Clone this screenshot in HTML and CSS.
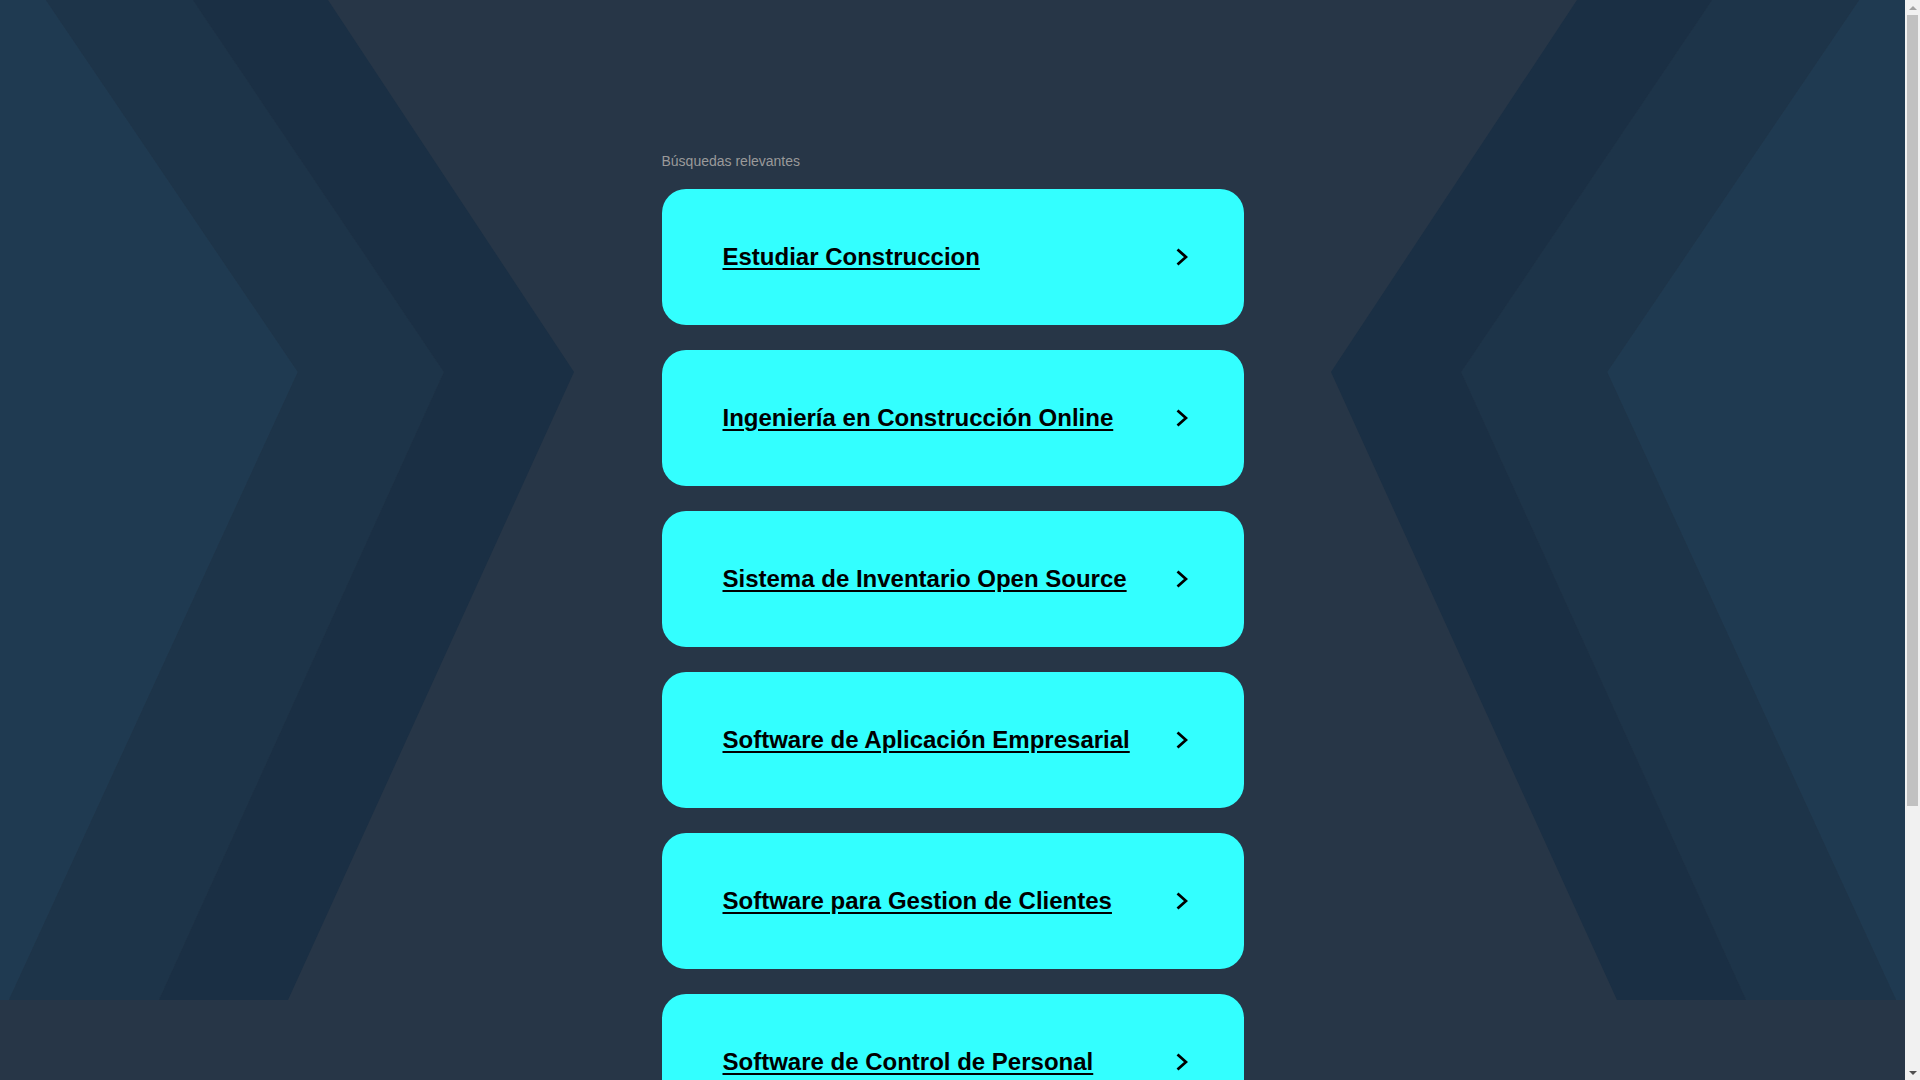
FILE: index.html
```html
<!DOCTYPE html>
<html lang="es">
<head>
<meta charset="utf-8">
<title>Búsquedas relevantes</title>
<link rel="stylesheet" href="styles.css">
</head>
<body>
<div class="page">
  <svg class="backdrop" viewBox="0 0 1905 1000" preserveAspectRatio="none" aria-hidden="true">
    <polygon class="band-light" points="0,0 46,0 298,372 9,1000 0,1000"/>
    <polygon class="band-mid" points="46,0 193,0 444,372 159,1000 9,1000 298,372"/>
    <polygon class="band-dark" points="193,0 328,0 574,372 288,1000 159,1000 444,372"/>
    <polygon class="band-light" points="1905,0 1859,0 1607,372 1896,1000 1905,1000"/>
    <polygon class="band-mid" points="1859,0 1712,0 1461,372 1746,1000 1896,1000 1607,372"/>
    <polygon class="band-dark" points="1712,0 1577,0 1331,372 1617,1000 1746,1000 1461,372"/>
  </svg>
  <main class="content">
    <div class="label">Búsquedas relevantes</div>
    <ul class="links">
      <li><a class="card" href="#"><span class="card-text">Estudiar Construccion</span><svg class="chev" viewBox="0 0 12 18"><polyline points="1.5,1.5 10,9 1.5,16.5"/></svg></a></li>
      <li><a class="card" href="#"><span class="card-text">Ingeniería en Construcción Online</span><svg class="chev" viewBox="0 0 12 18"><polyline points="1.5,1.5 10,9 1.5,16.5"/></svg></a></li>
      <li><a class="card" href="#"><span class="card-text">Sistema de Inventario Open Source</span><svg class="chev" viewBox="0 0 12 18"><polyline points="1.5,1.5 10,9 1.5,16.5"/></svg></a></li>
      <li><a class="card" href="#"><span class="card-text">Software de Aplicación Empresarial</span><svg class="chev" viewBox="0 0 12 18"><polyline points="1.5,1.5 10,9 1.5,16.5"/></svg></a></li>
      <li><a class="card" href="#"><span class="card-text">Software para Gestion de Clientes</span><svg class="chev" viewBox="0 0 12 18"><polyline points="1.5,1.5 10,9 1.5,16.5"/></svg></a></li>
      <li><a class="card" href="#"><span class="card-text">Software de Control de Personal</span><svg class="chev" viewBox="0 0 12 18"><polyline points="1.5,1.5 10,9 1.5,16.5"/></svg></a></li>
    </ul>
  </main>
</div>
<div class="scrollbar" aria-hidden="true">
  <div class="sb-arrow sb-up"></div>
  <div class="sb-track"><div class="sb-thumb"></div></div>
  <div class="sb-arrow sb-down"></div>
</div>
</body>
</html>
```
FILE: styles.css
```css
html, body {
  margin: 0;
  padding: 0;
}
body {
  background: #273647;
  font-family: "Liberation Sans", Arial, sans-serif;
}
.page {
  position: relative;
  margin-right: 15px;
  min-height: 1434px;
}
.backdrop {
  position: absolute;
  top: 0;
  left: 0;
  width: 100%;
  height: 1000px;
  z-index: 0;
}
.band-light { fill: #1f3a51; }
.band-mid { fill: #1d3449; }
.band-dark { fill: #1a2f44; }
.content {
  position: relative;
  z-index: 1;
  width: 582px;
  margin: 0 auto;
  padding-top: 153px;
  padding-bottom: 140px;
}
.label {
  font-size: 14px;
  line-height: 16px;
  color: #9a9a9a;
  margin-bottom: 20px;
}
.links {
  list-style: none;
  margin: 0;
  padding: 0;
  display: flex;
  flex-direction: column;
  gap: 25px;
}
.card {
  display: flex;
  align-items: center;
  justify-content: space-between;
  height: 136px;
  box-sizing: border-box;
  padding: 0 56px 0 61px;
  background: #33ffff;
  border-radius: 24px;
  color: #000;
  text-decoration: none;
}
.card-text {
  font-size: 24px;
  font-weight: bold;
  line-height: 28px;
  text-decoration: underline;
  text-underline-offset: 3px;
}
.chev {
  width: 12px;
  height: 18px;
  flex: none;
}
.chev polyline {
  fill: none;
  stroke: #000;
  stroke-width: 2.8;
}
.scrollbar {
  position: fixed;
  top: 0;
  right: 0;
  width: 15px;
  height: 100vh;
  background: #f1f1f1;
  display: flex;
  flex-direction: column;
  z-index: 5;
}
.sb-arrow {
  height: 15px;
  flex: none;
  display: flex;
  justify-content: center;
}
.sb-up::before,
.sb-down::before {
  content: "";
  width: 0;
  height: 0;
  border-left: 4px solid transparent;
  border-right: 4px solid transparent;
}
.sb-up { align-items: center; }
.sb-up::before { border-bottom: 4px solid #a3a3a3; }
.sb-down { align-items: center; }
.sb-down::before { border-top: 4px solid #505050; }
.sb-track {
  flex: 1;
  padding: 0 2px;
}
.sb-thumb {
  height: 791px;
  background: #c1c1c1;
}
```
